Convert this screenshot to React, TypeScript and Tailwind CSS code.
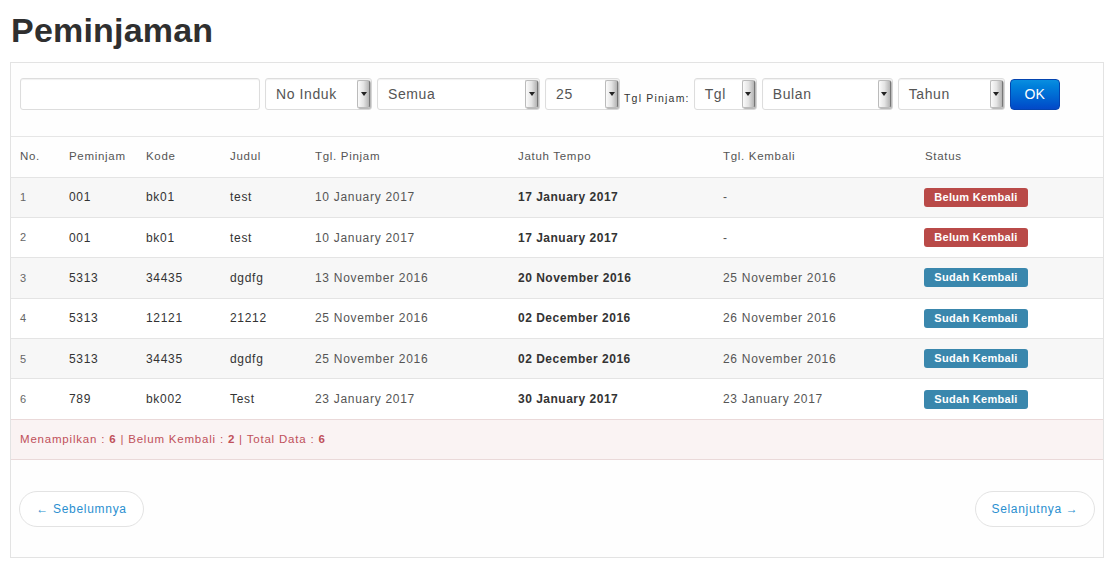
import React from 'react';

type Row = {
  no: number;
  peminjam: string;
  kode: string;
  judul: string;
  pinjam: string;
  tempo: string;
  kembali: string;
  returned: boolean;
};

const rows: Row[] = [
  { no: 1, peminjam: '001', kode: 'bk01', judul: 'test', pinjam: '10 January 2017', tempo: '17 January 2017', kembali: '-', returned: false },
  { no: 2, peminjam: '001', kode: 'bk01', judul: 'test', pinjam: '10 January 2017', tempo: '17 January 2017', kembali: '-', returned: false },
  { no: 3, peminjam: '5313', kode: '34435', judul: 'dgdfg', pinjam: '13 November 2016', tempo: '20 November 2016', kembali: '25 November 2016', returned: true },
  { no: 4, peminjam: '5313', kode: '12121', judul: '21212', pinjam: '25 November 2016', tempo: '02 December 2016', kembali: '26 November 2016', returned: true },
  { no: 5, peminjam: '5313', kode: '34435', judul: 'dgdfg', pinjam: '25 November 2016', tempo: '02 December 2016', kembali: '26 November 2016', returned: true },
  { no: 6, peminjam: '789', kode: 'bk002', judul: 'Test', pinjam: '23 January 2017', tempo: '30 January 2017', kembali: '23 January 2017', returned: true },
];

function Select({ label, width }: { label: string; width: string }) {
  return (
    <div className={`${width} h-8 flex items-center justify-between border border-[#ddd] rounded-[3px] bg-white pl-[10px] pr-[1px] shadow-[inset_0_1px_1px_rgba(0,0,0,0.06)]`}>
      <span className="text-[14px] tracking-[0.6px] text-[#555]">{label}</span>
      <span className="w-[13px] h-[28px] flex items-center justify-center rounded-[2px] border border-[#bbb] border-r-[#777] bg-gradient-to-r from-[#fbfbfb] via-[#e4e4e4] to-[#b4b4b4] shadow-[1px_1px_1px_rgba(0,0,0,0.3)]">
        <svg width="6" height="4" viewBox="0 0 6 4"><path d="M0 0h6L3 4z" fill="#222" /></svg>
      </span>
    </div>
  );
}

export default function App() {
  return (
    <div className="w-[1115px] h-[561px] bg-white font-['Liberation_Sans',Arial,sans-serif] text-[#333] overflow-hidden">
      <h1 className="pl-[11px] pt-[10px] h-[62px] text-[34px] leading-[40px] font-bold tracking-[0.2px] text-[#2f2f2f]">Peminjaman</h1>

      <div className="mx-[10px] w-[1094px] h-[496px] border border-[#e3e3e3] bg-[#fefefe]">
        <div className="h-[74px] border-b border-[#e6e6e6] pl-[9px] pt-[15px] flex items-start gap-[5px]">
          <div className="w-[240px] h-8 border border-[#ddd] rounded-[3px] bg-white shadow-[inset_0_1px_1px_rgba(0,0,0,0.06)]" />
          <Select label="No Induk" width="w-[107px]" />
          <Select label="Semua" width="w-[163px]" />
          <Select label="25" width="w-[75px]" />
          <span className="text-[10.5px] tracking-[1.2px] text-[#333] mt-[13px] -ml-[1px] mr-[-1px]">Tgl Pinjam:</span>
          <Select label="Tgl" width="w-[63px]" />
          <Select label="Bulan" width="w-[131px]" />
          <Select label="Tahun" width="w-[107px]" />
          <button className="w-[50px] h-[31px] mt-[1px] rounded-[4px] bg-gradient-to-b from-[#0a8ee0] to-[#0448c8] border border-[#0444b0] text-white text-[14px]">OK</button>
        </div>

        <table className="w-full table-fixed border-collapse text-[12px] tracking-[0.7px]">
          <colgroup>
            <col className="w-[49px]" />
            <col className="w-[77px]" />
            <col className="w-[84px]" />
            <col className="w-[85px]" />
            <col className="w-[203px]" />
            <col className="w-[205px]" />
            <col className="w-[202px]" />
            <col />
          </colgroup>
          <thead>
            <tr className="h-[40px] text-left text-[#555] text-[11.5px]">
              <th className="font-normal pl-[9px]">No.</th>
              <th className="font-normal pl-[9px]">Peminjam</th>
              <th className="font-normal pl-[9px]">Kode</th>
              <th className="font-normal pl-[9px]">Judul</th>
              <th className="font-normal pl-[9px]">Tgl. Pinjam</th>
              <th className="font-normal pl-[9px]">Jatuh Tempo</th>
              <th className="font-normal pl-[9px]">Tgl. Kembali</th>
              <th className="font-normal pl-[9px]">Status</th>
            </tr>
          </thead>
          <tbody>
            {rows.map((r, i) => (
              <tr key={r.no} className={`h-[40.4px] border-t border-[#e4e4e4] ${i % 2 === 0 ? 'bg-[#f7f7f7]' : 'bg-white'}`}>
                <td className="pl-[9px] text-[#666] text-[11px]">{r.no}</td>
                <td className="pl-[9px]">{r.peminjam}</td>
                <td className="pl-[9px]">{r.kode}</td>
                <td className="pl-[9px]">{r.judul}</td>
                <td className="pl-[9px] text-[#555]">{r.pinjam}</td>
                <td className="pl-[9px] font-bold tracking-[0.5px]">{r.tempo}</td>
                <td className="pl-[9px] text-[#555]">{r.kembali}</td>
                <td className="pl-[8px]">
                  <span className={`inline-block w-[104px] text-center py-[2px] rounded-[3px] text-white font-bold text-[11px] leading-[15px] tracking-[0.3px] ${r.returned ? 'bg-[#3a87ad]' : 'bg-[#b94a48]'}`}>
                    {r.returned ? 'Sudah Kembali' : 'Belum Kembali'}
                  </span>
                </td>
              </tr>
            ))}
            <tr className="h-[40px] border-t border-b border-[#ead9d9] bg-[#faf3f3]">
              <td colSpan={8} className="pl-[9px] text-[11.5px] tracking-[0.8px] text-[#c0505a]">
                Menampilkan : <b>6</b> | Belum Kembali : <b>2</b> | Total Data : <b>6</b>
              </td>
            </tr>
          </tbody>
        </table>

        <div className="flex justify-between px-[8px] pt-[31px]">
          <a className="h-[36px] w-[125px] flex items-center justify-center rounded-full border border-[#e3e3e3] bg-white text-[12px] tracking-[0.7px] text-[#2a8fd0]">← Sebelumnya</a>
          <a className="h-[36px] w-[120px] flex items-center justify-center rounded-full border border-[#e3e3e3] bg-white text-[12px] tracking-[0.7px] text-[#2a8fd0]">Selanjutnya →</a>
        </div>
      </div>
    </div>
  );
}
